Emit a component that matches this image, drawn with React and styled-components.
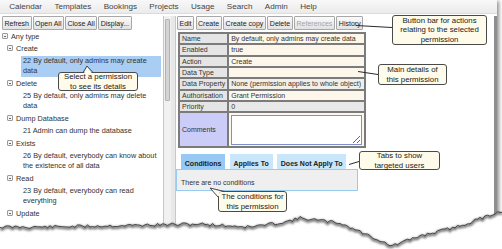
import React from "react";
import styled, { createGlobalStyle } from "styled-components";

const GlobalStyle = createGlobalStyle`
  html, body {
    margin: 0;
    padding: 0;
    background: #ffffff;
  }
  body {
    font-family: "Liberation Sans", Arial, sans-serif;
  }
`;

const Sheet = styled.div`
  position: relative;
  width: 502px;
  height: 249px;
  overflow: hidden;
  background: #ffffff;
`;

const Window = styled.div`
  width: 497px;
  height: 262px;
  display: flex;
  flex-direction: column;
  background: #ffffff;
  box-shadow: 2px 1px 4px rgba(0, 0, 0, 0.45);
`;

const MenuBar = styled.div`
  height: 13px;
  display: flex;
  align-items: center;
  padding-left: 3px;
  background: linear-gradient(#f8f8f8, #ebebeb);
  border-bottom: 1px solid #dcdcdc;
`;

const MenuItem = styled.span`
  padding: 0 6.2px;
  font-size: 8.1px;
  color: #444444;
`;

const Main = styled.div`
  flex: 1;
  display: flex;
  padding-top: 2px;
`;

const LeftPanel = styled.div`
  width: 163px;
  display: flex;
  flex-direction: column;
`;

const ButtonBar = styled.div`
  display: flex;
  gap: ${(p) => p.$gap || "1px"};
  padding-left: ${(p) => p.$inset || "2px"};
  height: 14px;
`;

const Button = styled.button`
  height: 14px;
  padding: 0 1.5px;
  margin: 0;
  border: 1px solid #a8a8a8;
  border-radius: 1px;
  background: linear-gradient(#fbfbfb, #e2e2e2);
  font-family: "Liberation Sans", Arial, sans-serif;
  font-size: 7px;
  color: ${(p) => (p.disabled ? "#a4a4a4" : "#222222")};
  white-space: nowrap;
`;

const Tree = styled.div`
  font-size: 7.3px;
  color: #333333;
`;

const TreeHeader = styled.div`
  height: 12px;
  display: flex;
  align-items: center;
  gap: 3px;
  padding-left: ${(p) => p.$level * 5 + 2}px;
`;

const Toggle = styled.span`
  position: relative;
  width: 4px;
  height: 4px;
  border: 1px solid #9a9a9a;
  border-radius: 1px;
  background: #f4f4f4;

  &::after {
    content: "";
    position: absolute;
    left: 1px;
    top: 1.5px;
    width: 2px;
    height: 1px;
    background: #6a6a6a;
  }
`;

const TreeItem = styled.div`
  margin: 2px 0 0 21px;
  width: 138px;
  padding: 0 0 1px 2px;
  line-height: 10px;
  white-space: nowrap;
  background: ${(p) => (p.$selected ? "#aacdf3" : "transparent")};
`;

const ScrollTrack = styled.div`
  width: 5px;
  padding: 3px 1px 0;
  border-left: 1px solid #c6c6c6;
  background: #f1f1f1;
`;

const ScrollThumb = styled.div`
  height: 82px;
  background: #d4d4d4;
  border: 1px solid #b2b2b2;
  border-radius: 1px;
  box-sizing: border-box;
`;

const Splitter = styled.div`
  width: 4px;
  background: #e8e8e8;
`;

const RightPanel = styled.div`
  flex: 1;
  display: flex;
  flex-direction: column;
  border-left: 1px solid #a6d2f2;
  border-right: 3px solid #8e8e8e;
`;

const DetailsTable = styled.table`
  margin: 2px 0 0 2px;
  width: 187px;
  border-collapse: collapse;
  border: 2px solid #7b7b7b;
  font-size: 7px;
  color: #333333;
`;

const Cell = styled.td`
  border: 2px solid #7b7b7b;
  padding: 0 2px;
  height: ${(p) => (p.$tall ? "33px" : "9.33px")};
  line-height: 9px;
  white-space: nowrap;
  background: ${(p) => p.$bg};
`;

const CommentsBox = styled.textarea`
  display: block;
  box-sizing: border-box;
  width: 131px;
  height: 30px;
  margin: 0;
  border: 1px solid #7f8fc8;
  background: #ffffff;
  resize: both;
`;

const Tabs = styled.div`
  display: flex;
  gap: 4.5px;
  margin: 6px 0 0 5px;
`;

const Tab = styled.div`
  height: 15px;
  box-sizing: border-box;
  display: flex;
  align-items: flex-end;
  padding: 0 3.8px 2px;
  font-size: 7px;
  font-weight: bold;
  color: #222222;
  background: ${(p) => (p.$active ? "#96c9f4" : "#c9e6fa")};
`;

const ConditionsPanel = styled.div`
  width: 182px;
  height: 22px;
  box-sizing: border-box;
  display: flex;
  align-items: center;
  padding: 4px 0 0 4px;
  border: 1px solid #98cbf0;
  background: #efefef;
  font-size: 7px;
  color: #333333;
`;

const Callout = styled.div`
  position: absolute;
  left: ${(p) => p.$x}px;
  top: ${(p) => p.$y}px;
  width: ${(p) => p.$w}px;
  height: ${(p) => p.$h}px;
  box-sizing: border-box;
  display: flex;
  align-items: center;
  justify-content: center;
  text-align: center;
  background: #fffbea;
  border: 1px solid #4a4a4a;
  border-radius: 3px;
  font-size: 7.8px;
  line-height: 9.3px;
  color: #1a1a1a;
`;

const Overlay = styled.svg`
  position: absolute;
  left: 0;
  top: 0;
  pointer-events: none;
`;

const menu = ["Calendar", "Templates", "Bookings", "Projects", "Usage", "Search", "Admin", "Help"];

const tree = [
  { name: "Create", items: [{ lines: ["22 By default, only admins may create", "data"], selected: true }] },
  { name: "Delete", items: [{ lines: ["25 By default, only admins may delete", "data"] }] },
  { name: "Dump Database", items: [{ lines: ["21 Admin can dump the database"] }] },
  { name: "Exists", items: [{ lines: ["26 By default, everybody can know about", "the existence of all data"] }] },
  { name: "Read", items: [{ lines: ["23 By default, everybody can read", "everything"] }] },
  { name: "Update", items: [] },
];

const CREAM = "#fcf7ea";
const LABEL = "#e5e5e5";

const details = [
  ["Name", "By default, only admins may create data", CREAM],
  ["Enabled", "true", CREAM],
  ["Action", "Create", CREAM],
  ["Data Type", "", CREAM],
  ["Data Property", "None (permission applies to whole object)", "#f1efe9"],
  ["Authorisation", "Grant Permission", CREAM],
  ["Priority", "0", "#e8e8e8"],
];

// rough outline of the torn bottom edge
const EDGE = [
  [0, 227], [40, 227], [100, 226], [150, 225], [200, 224], [250, 227],
  [285, 222], [300, 218], [340, 223], [370, 236], [392, 246], [420, 236],
  [460, 226], [490, 215], [502, 211],
];

function tornPoints() {
  const pts = [];
  let seed = 11;
  const rnd = () => {
    seed = (seed * 9301 + 49297) % 233280;
    return seed / 233280;
  };
  for (let x = 0; x <= 504; x += 2.5) {
    let i = 0;
    while (i < EDGE.length - 2 && EDGE[i + 1][0] < x) i++;
    const [x0, y0] = EDGE[i];
    const [x1, y1] = EDGE[i + 1];
    const t = Math.min(1, Math.max(0, (x - x0) / (x1 - x0)));
    pts.push([x, y0 + (y1 - y0) * t + (rnd() - 0.5) * 3]);
  }
  return pts;
}

const edge = tornPoints();
const edgeLine = edge.map(([x, y], i) => `${i ? "L" : "M"}${x.toFixed(1)},${y.toFixed(1)}`).join(" ");
const edgeFill = `${edgeLine} L504,260 L0,260 Z`;

function Annotations() {
  return (
    <Overlay width="502" height="249" viewBox="0 0 502 249">
      <defs>
        <filter id="blur" x="-5%" y="-50%" width="110%" height="200%">
          <feGaussianBlur stdDeviation="1.2" />
        </filter>
      </defs>

      {/* connectors */}
      <line x1="356" y1="25.5" x2="392" y2="27.5" stroke="#2a2a2a" strokeWidth="1" />
      <line x1="358" y1="71.5" x2="378" y2="74.5" stroke="#2a2a2a" strokeWidth="1" />
      <line x1="349" y1="164.5" x2="359" y2="161.5" stroke="#2a2a2a" strokeWidth="1" />

      {/* tail: select a permission */}
      <polygon points="83.8,73.4 87,67 92.2,73.4" fill="#fffbea" />
      <polyline points="83,72.5 87,66 93,72.5" fill="none" stroke="#4a4a4a" strokeWidth="1" />

      {/* tail: the conditions */}
      <polygon points="224.5,192.4 211,188.6 219.4,197 219.4,192.4" fill="#fffbea" />
      <polyline points="224.5,191.5 210,188 218.5,197.5" fill="none" stroke="#4a4a4a" strokeWidth="1" />

      {/* torn bottom edge */}
      <path d={edgeFill} fill="#ffffff" />
      <path d={edgeLine} fill="none" stroke="#6a6a6a" strokeWidth="2.4" filter="url(#blur)" transform="translate(0 1.2)" />
      <path d={edgeLine} fill="none" stroke="#3c3c3c" strokeWidth="0.9" />
    </Overlay>
  );
}

function PermissionTree() {
  return (
    <Tree>
      <TreeHeader $level={0}>
        <Toggle />
        Any type
      </TreeHeader>
      {tree.map((group) => (
        <React.Fragment key={group.name}>
          <TreeHeader $level={1}>
            <Toggle />
            {group.name}
          </TreeHeader>
          {group.items.map((item) => (
            <TreeItem key={item.lines[0]} $selected={item.selected}>
              {item.lines.map((line) => (
                <div key={line}>{line}</div>
              ))}
            </TreeItem>
          ))}
        </React.Fragment>
      ))}
    </Tree>
  );
}

function PermissionDetails() {
  return (
    <DetailsTable>
      <tbody>
        {details.map(([label, value, bg]) => (
          <tr key={label}>
            <Cell $bg={LABEL} style={{ width: 44 }}>
              {label}
            </Cell>
            <Cell $bg={bg}>{value}</Cell>
          </tr>
        ))}
        <tr>
          <Cell $bg="#ccccf8" $tall>
            Comments
          </Cell>
          <Cell $bg={CREAM} $tall>
            <CommentsBox readOnly defaultValue="" />
          </Cell>
        </tr>
      </tbody>
    </DetailsTable>
  );
}

export default function App() {
  return (
    <>
      <GlobalStyle />
      <Sheet>
        <Window>
          <MenuBar>
            {menu.map((m) => (
              <MenuItem key={m}>{m}</MenuItem>
            ))}
          </MenuBar>

          <Main>
            <LeftPanel>
              <ButtonBar>
                <Button>Refresh</Button>
                <Button>Open All</Button>
                <Button>Close All</Button>
                <Button>Display...</Button>
              </ButtonBar>
              <PermissionTree />
            </LeftPanel>

            <ScrollTrack>
              <ScrollThumb />
            </ScrollTrack>
            <Splitter />

            <RightPanel>
              <ButtonBar $gap="1.5px" $inset="1px">
                <Button>Edit</Button>
                <Button>Create</Button>
                <Button>Create copy</Button>
                <Button>Delete</Button>
                <Button disabled>References</Button>
                <Button>History</Button>
              </ButtonBar>

              <PermissionDetails />

              <Tabs>
                <Tab $active>Conditions</Tab>
                <Tab>Applies To</Tab>
                <Tab>Does Not Apply To</Tab>
              </Tabs>
              <ConditionsPanel>There are no conditions</ConditionsPanel>
            </RightPanel>
          </Main>
        </Window>

        <Callout $x={392} $y={15} $w={95} $h={30}>
          Button bar for actions
          <br />
          relating to the selected
          <br />
          permission
        </Callout>
        <Callout $x={378} $y={64} $w={69} $h={21}>
          Main details of
          <br />
          this permission
        </Callout>
        <Callout $x={359} $y={151} $w={81} $h={19}>
          Tabs to show
          <br />
          targeted users
        </Callout>
        <Callout $x={218} $y={191} $w={69} $h={21}>
          The conditions for
          <br />
          this permission
        </Callout>
        <Callout $x={58} $y={72} $w={80} $h={19}>
          Select a permission
          <br />
          to see its details
        </Callout>

        <Annotations />
      </Sheet>
    </>
  );
}
